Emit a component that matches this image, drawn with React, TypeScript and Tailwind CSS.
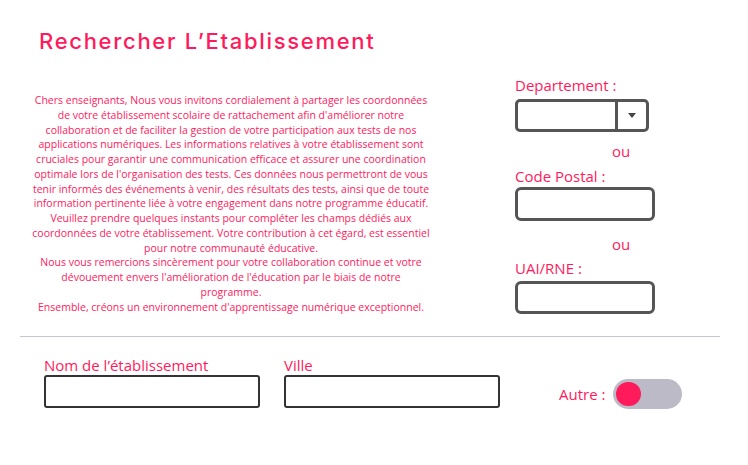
import React from "react";

const PINK = "text-[#ff1a5c]";

const lines = [
  "Chers enseignants, Nous vous invitons cordialement à partager les coordonnées",
  "de votre établissement scolaire de rattachement afin d'améliorer notre",
  "collaboration et de faciliter la gestion de votre participation aux tests de nos",
  "applications numériques. Les informations relatives à votre établissement sont",
  "cruciales pour garantir une communication efficace et assurer une coordination",
  "optimale lors de l'organisation des tests. Ces données nous permettront de vous",
  "tenir informés des événements à venir, des résultats des tests, ainsi que de toute",
  "information pertinente liée à votre engagement dans notre programme éducatif.",
  "Veuillez prendre quelques instants pour compléter les champs dédiés aux",
  "coordonnées de votre établissement. Votre contribution à cet égard, est essentiel",
  "pour notre communauté éducative.",
  "Nous vous remercions sincèrement pour votre collaboration continue et votre",
  "dévouement envers l'amélioration de l'éducation par le biais de notre",
  "programme.",
  "Ensemble, créons un environnement d'apprentissage numérique exceptionnel.",
];

export default function App() {
  return (
    <div
      className="w-[748px] h-[465px] bg-white overflow-hidden"
      style={{ fontFamily: '"Open Sans", sans-serif' }}
    >
      <div className="flex h-[336px]">
        <div className="ml-[20px] w-[422px] pt-[30px]">
          <h1
            className={`ml-[19px] text-[22px] leading-[22px] font-medium tracking-[1.7px] ${PINK} whitespace-nowrap`}
            style={{ fontFamily: 'Inter, sans-serif' }}
          >
            Rechercher L’Etablissement
          </h1>
          <div className={`mt-[41px] text-center text-[10.5px] leading-[14.75px] ${PINK} whitespace-nowrap`}>
            {lines.map((l, i) => (
              <div key={i}>{l}</div>
            ))}
          </div>
        </div>
        <div className="ml-[73px] pt-[75px] flex flex-col">
          <div className={`text-[15px] leading-[20px] ${PINK}`}>Departement :</div>
          <div className="mt-[4px] w-[134px] h-[33px] border-[3px] border-[#555] rounded-[5px] flex">
            <div className="flex-1" />
            <div className="w-[31px] border-l-[3px] border-[#555] flex items-center justify-center">
              <svg width="8" height="5" viewBox="0 0 8 5">
                <path d="M0 0 L8 0 L4 5 Z" fill="#444" />
              </svg>
            </div>
          </div>
          <div className={`mt-[9px] ml-[97px] text-[15px] leading-[20px] ${PINK}`}>ou</div>
          <div className={`mt-[5px] text-[15px] leading-[20px] ${PINK}`}>Code Postal :</div>
          <div className="mt-[1px] w-[140px] h-[34px] border-[3px] border-[#555] rounded-[6px]" />
          <div className={`mt-[13px] ml-[97px] text-[15px] leading-[20px] ${PINK}`}>ou</div>
          <div className={`mt-[4px] text-[15px] leading-[20px] ${PINK}`}>UAI/RNE :</div>
          <div className="mt-[3px] w-[140px] h-[33px] border-[3px] border-[#555] rounded-[6px]" />
        </div>
      </div>
      <div className="ml-[20px] w-[700px] h-px bg-[#c5c5d5]" />
      <div className="flex items-end mt-[18px] ml-[44px]">
        <div className="flex flex-col">
          <div className={`text-[15px] leading-[20px] ${PINK}`}>Nom de l’établissement</div>
          <div className="w-[216px] h-[33px] border-2 border-[#333] rounded-[3px]" />
        </div>
        <div className="flex flex-col ml-[24px]">
          <div className={`text-[15px] leading-[20px] ${PINK}`}>Ville</div>
          <div className="w-[216px] h-[33px] border-2 border-[#333] rounded-[3px]" />
        </div>
        <div className="flex items-center ml-[59px] mb-[-1px]">
          <span className={`text-[15px] leading-[20px] ${PINK}`}>Autre :</span>
          <div className="ml-[8px] w-[69px] h-[30px] rounded-full bg-[#bcbac6] flex items-center pl-[3px]">
            <div className="w-[25px] h-[24px] rounded-full bg-[#ff1a5c]" />
          </div>
        </div>
      </div>
    </div>
  );
}
